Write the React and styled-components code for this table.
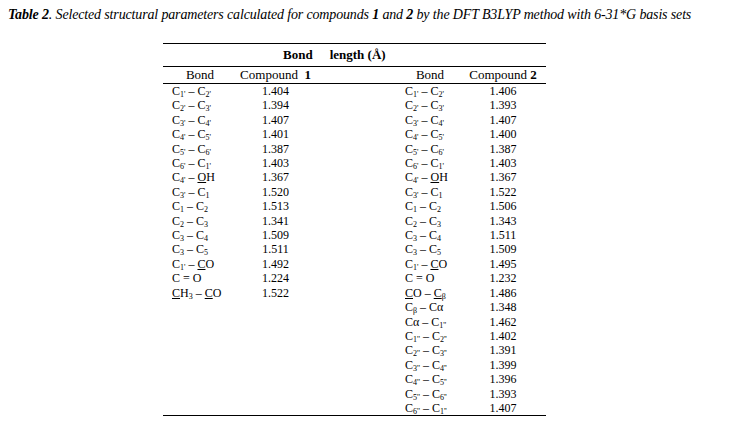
import React from 'react';
import styled, {createGlobalStyle} from "styled-components";

const GlobalStyle = createGlobalStyle`
    body {
        margin: 0;
        background: #fff;
        font-family: "Liberation Serif", "Times New Roman", serif;
        color: #000;
    }
`;

const Page = styled.div`
    width: 731px;
    height: 423px;
    padding: 7px 0 0 8px;
    box-sizing: border-box;
`;

const Caption = styled.p`
    margin: 0;
    font-size: 14px;
    line-height: 16px;
    font-style: italic;
    letter-spacing: -0.15px;
    white-space: nowrap;
`;

const Table = styled.table`
    margin: 20px 0 0 155px;
    border-collapse: collapse;
    font-size: 12px;
    border-top: 1px solid #000;
    border-bottom: 1px solid #000;
`;

const SpanCell = styled.th`
    height: 22px;
    padding: 0 0 0 120px;
    text-align: left;
    font-size: 13px;
    font-weight: bold;
    border-bottom: 1px solid #000;
`;

const Gap = styled.span`
    display: inline-block;
    width: 17px;
`;

const HeadRow = styled.tr`
    height: 16px;
    border-bottom: 1px solid #000;
`;

const HeadCell = styled.th`
    padding: 0;
    font-size: 13px;
    font-weight: normal;
    text-align: center;
    white-space: nowrap;
`;

const BodyRow = styled.tr`
    height: 14.4px;
`;

const LabelCell = styled.td`
    padding: 0 0 0 ${props => props.indent}px;
    line-height: 14.4px;
    white-space: nowrap;
`;

const ValueCell = styled.td`
    padding: 0;
    line-height: 14.4px;
    text-align: center;
`;

const Sub = styled.sub`
    font-size: 8px;
    line-height: 0;
    vertical-align: -2px;
`;

const U = styled.span`
    text-decoration: underline;
    text-underline-offset: 1px;
`;

const C = ({s}) => <>C<Sub>{s}</Sub></>;

const bonds = [
    {label: <><C s="1'" /> – <C s="2'" /></>, a: "1.404", b: "1.406"},
    {label: <><C s="2'" /> – <C s="3'" /></>, a: "1.394", b: "1.393"},
    {label: <><C s="3'" /> – <C s="4'" /></>, a: "1.407", b: "1.407"},
    {label: <><C s="4'" /> – <C s="5'" /></>, a: "1.401", b: "1.400"},
    {label: <><C s="5'" /> – <C s="6'" /></>, a: "1.387", b: "1.387"},
    {label: <><C s="6'" /> – <C s="1'" /></>, a: "1.403", b: "1.403"},
    {label: <><C s="4'" /> – <U>O</U>H</>, a: "1.367", b: "1.367"},
    {label: <><C s="3'" /> – <C s="1" /></>, a: "1.520", b: "1.522"},
    {label: <><C s="1" /> – <C s="2" /></>, a: "1.513", b: "1.506"},
    {label: <><C s="2" /> – <C s="3" /></>, a: "1.341", b: "1.343"},
    {label: <><C s="3" /> – <C s="4" /></>, a: "1.509", b: "1.511"},
    {label: <><C s="3" /> – <C s="5" /></>, a: "1.511", b: "1.509"},
    {label: <><C s="1'" /> – <U>C</U>O</>, a: "1.492", b: "1.495"},
    {label: <>C = O</>, a: "1.224", b: "1.232"},
];

const extraLeft = {label: <><U>C</U>H<Sub>3</Sub> – <U>C</U>O</>, a: "1.522"};

const extraRight = [
    {label: <><U>C</U>O – <U>C</U><Sub>β</Sub></>, b: "1.486"},
    {label: <>C<Sub>β</Sub> – Cα</>, b: "1.348"},
    {label: <>Cα – <C s="1''" /></>, b: "1.462"},
    {label: <><C s="1''" /> – <C s="2''" /></>, b: "1.402"},
    {label: <><C s="2''" /> – <C s="3''" /></>, b: "1.391"},
    {label: <><C s="3''" /> – <C s="4''" /></>, b: "1.399"},
    {label: <><C s="4''" /> – <C s="5''" /></>, b: "1.396"},
    {label: <><C s="5''" /> – <C s="6''" /></>, b: "1.393"},
    {label: <><C s="6''" /> – <C s="1''" /></>, b: "1.407"},
];

const App = () => {
    const rows = bonds.map(row => ({left: row, right: row}));
    rows.push({left: extraLeft, right: extraRight[0]});
    extraRight.slice(1).forEach(row => rows.push({left: null, right: row}));

    return (
        <Page>
            <GlobalStyle />
            <Caption>
                <b>Table 2</b>. Selected structural parameters calculated for compounds <b>1</b> and <b>2</b> by the DFT B3LYP method with 6-31*G basis sets
            </Caption>
            <Table>
                <colgroup>
                    <col style={{width: 74}} />
                    <col style={{width: 77}} />
                    <col style={{width: 86}} />
                    <col style={{width: 60}} />
                    <col style={{width: 86}} />
                </colgroup>
                <thead>
                    <tr>
                        <SpanCell colSpan={5}>Bond<Gap />length (Å)</SpanCell>
                    </tr>
                    <HeadRow>
                        <HeadCell>Bond</HeadCell>
                        <HeadCell>Compound&nbsp; <b>1</b></HeadCell>
                        <HeadCell />
                        <HeadCell>Bond</HeadCell>
                        <HeadCell>Compound <b>2</b></HeadCell>
                    </HeadRow>
                </thead>
                <tbody>
                    {rows.map((row, i) => (
                        <BodyRow key={i}>
                            <LabelCell indent={9}>{row.left && row.left.label}</LabelCell>
                            <ValueCell>{row.left && row.left.a}</ValueCell>
                            <ValueCell />
                            <LabelCell indent={5}>{row.right.label}</LabelCell>
                            <ValueCell>{row.right.b}</ValueCell>
                        </BodyRow>
                    ))}
                </tbody>
            </Table>
        </Page>
    );
};

export default App;
